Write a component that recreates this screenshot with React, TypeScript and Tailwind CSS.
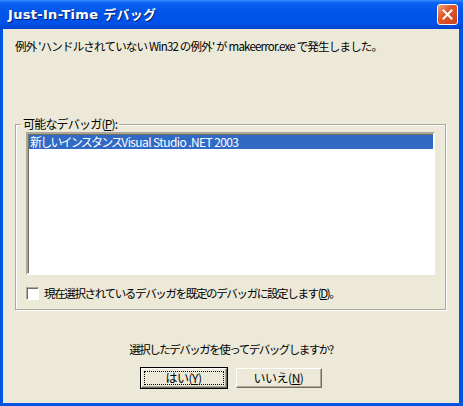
import React from "react";

const font = { fontFamily: '"Noto Sans CJK JP", "Liberation Sans", sans-serif' };

// classic raised button
const Button = ({ label, accel, isDefault }: { label: string; accel: string; isDefault?: boolean }) => {
    return (
        <div className={`${isDefault ? 'border border-black' : 'border border-transparent'} w-[88px] h-[22px]`}>
            <div className="w-full h-full bg-[#ECE9D8] border border-t-white border-l-white border-r-[#716F64] border-b-[#716F64] shadow-[inset_-1px_-1px_0_#ACA899] flex items-center justify-center relative">
                {isDefault && <div className="absolute inset-[2px] border border-dotted border-black"></div>}
                <span className="text-[12px] leading-[14px] text-black tracking-[-0.5px]">
                    {label}(<span className="underline">{accel}</span>)
                </span>
            </div>
        </div>
    )
}

export default function App() {
    return (
        <div style={font} className="w-[463px] h-[406px] bg-[#0054E3] flex flex-col">

            {/* title bar */}
            <div className="h-[29px] flex items-center justify-between pl-[8px] pr-[5px] bg-[linear-gradient(180deg,#3A8CFF_0%,#0A62F0_10%,#0055EA_40%,#0052E8_80%,#0043CF_100%)]">
                <span className="text-white font-bold text-[13px] tracking-[0.3px] [text-shadow:1px_1px_0_#0A1E6E]" style={{ fontFamily: '"DejaVu Sans", "Noto Sans CJK JP", sans-serif' }}>
                    Just-In-Time デバッグ
                </span>
                <div className="w-[21px] h-[21px] rounded-[3px] border border-white bg-[linear-gradient(135deg,#F0A080_0%,#E2582E_40%,#C8401C_100%)] flex items-center justify-center">
                    <svg width="11" height="11" viewBox="0 0 11 11">
                        <path d="M1.5 1.5 L9.5 9.5 M9.5 1.5 L1.5 9.5" stroke="white" strokeWidth="2" strokeLinecap="square" />
                    </svg>
                </div>
            </div>

            {/* client */}
            <div className="flex-1 ml-[3px] mr-[4px] mb-[3px] bg-[#ECE9D8] flex flex-col text-black">

                <p className="pl-[12px] pt-[10px] text-[11.5px] leading-[14px] tracking-[-0.8px] whitespace-nowrap">
                    例外 'ハンドルされていない Win32 の例外' が makeerror.exe で発生しました。
                </p>

                {/* group box */}
                <div className="relative ml-[12px] mr-[13px] mt-[71px] h-[186px] border border-[#ACA899] shadow-[inset_1px_1px_0_#fff,1px_1px_0_#fff] flex flex-col px-[10px] pt-[7px]">
                    <div className="absolute left-[5px] top-[-8px] px-[2px] bg-[#ECE9D8] text-[12px] leading-[14px] tracking-[-0.8px]">
                        可能なデバッガ(<span className="underline">P</span>):
                    </div>

                    {/* list */}
                    <div className="h-[143px] bg-white border-2 border-t-[#ACA899] border-l-[#ACA899] border-r-white border-b-white shadow-[inset_1px_1px_0_#716F64] pt-[1px] pl-[1px]">
                        <div className="h-[14px] bg-[#316AC5] text-white text-[12px] leading-[14px] pl-[1px] whitespace-nowrap">
                            <span className="tracking-[-1.8px]">新しいインスタンス</span>
                            <span className="tracking-[-0.6px]">Visual Studio .NET 2003</span>
                        </div>
                    </div>

                    {/* checkbox */}
                    <div className="flex items-center mt-[11px] gap-[5px]">
                        <div className="w-[13px] h-[13px] bg-white border border-t-[#ACA899] border-l-[#ACA899] border-r-white border-b-white shadow-[inset_1px_1px_0_#716F64]"></div>
                        <span className="text-[11.5px] leading-[14px] tracking-[-1.35px] whitespace-nowrap">
                            現在選択されているデバッガを既定のデバッガに設定します(<span className="underline">D</span>)。
                        </span>
                    </div>
                </div>

                <p className="text-center mt-[32px] text-[11.5px] leading-[14px] tracking-[-1.5px]">
                    選択したデバッガを使ってデバッグしますか?
                </p>

                <div className="flex justify-center gap-[7px] mt-[11px]">
                    <Button label="はい" accel="Y" isDefault />
                    <Button label="いいえ" accel="N" />
                </div>
            </div>
        </div>
    )
}
